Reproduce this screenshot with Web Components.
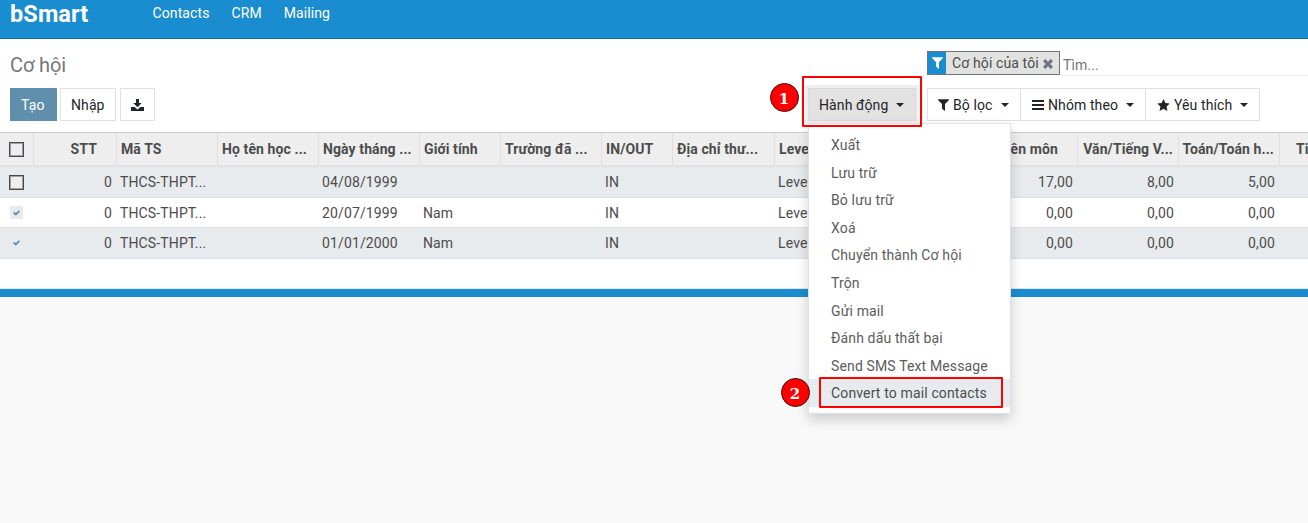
<!DOCTYPE html>
<html lang="vi"><head><meta charset="utf-8"><title>Cơ hội</title>
<style>
html,body{margin:0;height:100%;overflow:hidden}
body{background:#f9f9f9;font:14px/20px Roboto,"Noto Sans",sans-serif;color:#4c4c4c;position:relative}
</style></head><body>
<crm-page></crm-page>
<script>
const define=(name,html,setup)=>customElements.define(name,class extends HTMLElement{
  constructor(){super();this.attachShadow({mode:'open'}).innerHTML=html}
  connectedCallback(){if(setup)setup.call(this,this.shadowRoot)}
});

const glyphs={
  filter:['0 0 11 12','M.3.3h10.4q.6.4.1.9L7 5.1v6.2q-.2.8-.9.3L4 9.6V5.1L.2 1.2Q-.3.6.3.3z'],
  bars:['0 0 12 12','M0 1h12v2H0zM0 5h12v2H0zM0 9h12v2H0z'],
  star:['0 0 13 12','M6.5 0l1.9 3.9 4.3.6-3.1 3 .8 4.4-3.9-2.1-3.9 2.1.8-4.4-3.1-3 4.3-.6z'],
  download:['0 0 13 12','M5 0h3v4h2.7L6.5 8.2 2.3 4H5zM0 8h3.6l2.9 2.5L9.4 8H13v4H0z'],
  close:['0 0 10 10','M2.2 0L5 2.8 7.8 0 10 2.2 7.2 5 10 7.8 7.8 10 5 7.2 2.2 10 0 7.8 2.8 5 0 2.2z'],
  check:['0 0 7 6','M.7 2.5L2.8 4.5 6.4.8','s'],
  caret:['0 0 8 4','M0 0h8L4 4z']
};
customElements.define('glyph-icon',class extends HTMLElement{
  constructor(){super();this.attachShadow({mode:'open'})}
  connectedCallback(){
    const [vb,d,s]=glyphs[this.getAttribute('name')],[,,w,h]=vb.split(' ');
    this.shadowRoot.innerHTML=`<style>:host{display:inline-flex;flex:none}svg{display:block}</style><svg width="${w}" height="${h}" viewBox="${vb}"><path d="${d}" ${s?'fill="none" stroke="currentColor" stroke-width="1.8"':'fill="currentColor"'}/></svg>`;
  }
});

define('app-navbar',`<style>
:host{display:flex;height:38px;background:#1a8dd1;border-bottom:1px solid #166fa4;color:#fff;line-height:26px;padding-left:10px;box-sizing:content-box}
b{font-size:23.5px;font-weight:700;line-height:28px;width:142.5px;letter-spacing:.1px}
a{margin-right:22px;letter-spacing:.1px}
</style><b>bSmart</b><a>Contacts</a><a>CRM</a><a>Mailing</a>`);

define('ui-button',`<style>
:host{display:flex;align-items:center;box-sizing:border-box;height:33px;border:1px solid #dee2e6;background:#fff;color:#212529;padding:0 10px;white-space:nowrap;letter-spacing:.1px}
:host([primary]){background:#5f8fad;border-color:#5f8fad;color:#fff}
:host([active]){background:#e2e2e2;border-color:#dadbdc;box-shadow:0 0 0 3px #efefef}
</style><slot></slot>`);

define('search-facet',`<style>
:host{display:flex;box-sizing:border-box;width:133px;height:24px;border:1px solid #6c757d;background:#e2e2e0;color:#4c4c4c;line-height:22px}
.i{width:18px;background:#1a8dd1;color:#fff;display:flex;align-items:center;justify-content:center}
.t{padding:0 4px 0 6px;letter-spacing:.12px;white-space:nowrap}
.x{display:flex;align-items:center;color:#6c757d;padding-top:1px}
</style><span class="i"><glyph-icon name="filter"></glyph-icon></span><span class="t"><slot></slot></span><span class="x"><glyph-icon name="close"></glyph-icon></span>`);

define('control-panel',`<style>
:host{display:grid;grid-template-columns:927px 1fr;grid-template-rows:36px 1fr;height:93px;box-sizing:border-box;background:#fff;padding-top:12px}
h1{margin:0;padding-left:10px;font-weight:400;font-size:20px;line-height:28px;color:#777;letter-spacing:-.1px}
.search{display:flex;height:25px;box-sizing:border-box}
.input{flex:1;border-bottom:1px solid #eceef0;padding-left:3px;line-height:28px;color:#757575;letter-spacing:.1px}
.row{display:flex;padding-top:1px}
.left{padding-left:10px}
.tools{display:flex;margin-left:auto;margin-right:11px}
glyph-icon[name=caret]{margin-left:auto}
.filters glyph-icon:not([name=caret]){margin-right:4px}
</style>
<h1>Cơ hội</h1>
<div class="search"><search-facet>Cơ hội của tôi</search-facet><span class="input">Tìm...</span></div>
<div class="row left">
<ui-button primary style="width:47px;margin-right:3px">Tạo</ui-button>
<ui-button style="width:56px;margin-right:4px">Nhập</ui-button>
<ui-button style="width:35px"><glyph-icon name="download"></glyph-icon></ui-button>
<div class="tools"><ui-button active style="width:108px;padding-right:11px">Hành động<glyph-icon name="caret"></glyph-icon></ui-button></div></div>
<div class="row filters">
<ui-button style="width:94px;padding-right:11px"><glyph-icon name="filter"></glyph-icon>Bộ lọc<glyph-icon name="caret"></glyph-icon></ui-button>
<ui-button style="width:126px;margin-left:-1px;padding:0 11px"><glyph-icon name="bars"></glyph-icon>Nhóm theo<glyph-icon name="caret"></glyph-icon></ui-button>
<ui-button style="width:115px;margin-left:-1px;padding:0 11px"><glyph-icon name="star"></glyph-icon>Yêu thích<glyph-icon name="caret"></glyph-icon></ui-button>
</div>`);

define('check-box',`<style>
:host{display:flex;width:15px;height:15px;box-sizing:border-box;border:1px solid #474a4e;box-shadow:inset 0 0 0 1px #9da1a5;background:#eee;align-items:center;justify-content:center;color:#5f8fad;margin-left:9px}
:host([checked]){border:0;box-shadow:none;width:13px;height:13px;background:#e7ebee;margin-left:10px}
glyph-icon{display:none}:host([checked]) glyph-icon{display:flex}
</style><glyph-icon name="check"></glyph-icon>`);

const columns=[['STT','n'],['Mã TS'],['Họ tên học ...'],['Ngày tháng ...'],['Giới tính'],['Trường đã ...'],['IN/OUT'],['Địa chỉ thư...'],['Level'],[''],['Chuyên môn','n'],['Văn/Tiếng V...','n f'],['Toán/Toán h...','n f'],['Tiếng Anh','n']];
const records=[
 ['0','THCS-THPT...','','04/08/1999','','','IN','','Level','','17,00','8,00','5,00',''],
 ['0','THCS-THPT...','','20/07/1999','Nam','','IN','','Level','','0,00','0,00','0,00',''],
 ['0','THCS-THPT...','','01/01/2000','Nam','','IN','','Level','','0,00','0,00','0,00','']];
define('record-list',`<style>
:host{display:block;overflow:hidden;background:#fff;border-top:1px solid #c9cccf;border-bottom:1px solid #e1e4e8;height:155px}
.r{display:grid;grid-template-columns:34px 83px 101px 101px 101px 81px 101px 71px 102px 101px 101px 101px 101px 101px 101px;width:1381px;box-sizing:border-box;border-bottom:1px solid #dee2e6;align-items:center}
.r>*{box-sizing:border-box;white-space:nowrap}
.r>span{padding:0 5px 0 3px;letter-spacing:.13px}
.n{text-align:right}
.h{height:34px;background:#eee;border-bottom:2px solid #dee2e6;font-weight:700}
.h>*{height:100%;border-right:1px solid #dfdfdf;display:flex;align-items:center}
.h>span{padding-left:4px;letter-spacing:.1px}
.h>.n{justify-content:flex-end;padding-right:19px}.h>.n.f{padding-right:5px}
</style><div id="t"></div>`,function(root){
  const cells=(a)=>a.map((t,i)=>`<span class="${columns[i][1]||''}">${t}</span>`).join('');
  root.getElementById('t').innerHTML=`<div class="r h"><div><check-box></check-box></div>${cells(columns.map(c=>c[0]))}</div>`+
   records.map((r,i)=>`<div class="r" style="height:${[31,30,31][i]}px;background:${i==1?'#fff':'#e8ebee'}"><div><check-box ${i?'checked':''}></check-box></div>${cells(r)}</div>`).join('');
});

define('action-menu',`<style>
:host{position:absolute;left:808px;top:123px;width:203px;height:291px;box-sizing:border-box;background:#fff;border:1px solid #dee2e6;box-shadow:0 6px 12px rgba(0,0,0,.175);padding-top:7px;color:#5c5c5c}
div{height:27.6px;line-height:28px;padding-left:22px;letter-spacing:.14px;white-space:nowrap}
div:last-child{background:#e8ebee;color:#4c4c4c}
</style><div>Xuất</div><div>Lưu trữ</div><div>Bỏ lưu trữ</div><div>Xoá</div><div>Chuyển thành Cơ hội</div><div>Trộn</div><div>Gửi mail</div><div>Đánh dấu thất bại</div><div>Send SMS Text Message</div><div>Convert to mail contacts</div>`);

define('step-badge',`<style>
:host{position:absolute;width:29px;height:29px;box-sizing:border-box;border:1.5px solid #401010;border-radius:50%;background:#f00;color:#fff;font:700 15px/30px "DejaVu Serif",serif;text-align:center}
</style><slot></slot>`);
define('step-frame',`<style>:host{position:absolute;box-sizing:border-box;border:2px solid #f00;border-radius:1px}</style>`);

define('crm-page',`<style>:host{display:block;width:1308px}.bar{height:8px;background:#1a8dd1}</style>
<app-navbar></app-navbar><control-panel></control-panel><record-list></record-list><div class="bar"></div>
<action-menu></action-menu>
<step-frame style="left:802px;top:76px;width:120px;height:51px"></step-frame>
<step-frame style="left:819px;top:377px;width:184px;height:31px"></step-frame>
<step-badge style="left:769.5px;top:83px">1</step-badge>
<step-badge style="left:780.5px;top:378px">2</step-badge>`);
</script></body></html>
